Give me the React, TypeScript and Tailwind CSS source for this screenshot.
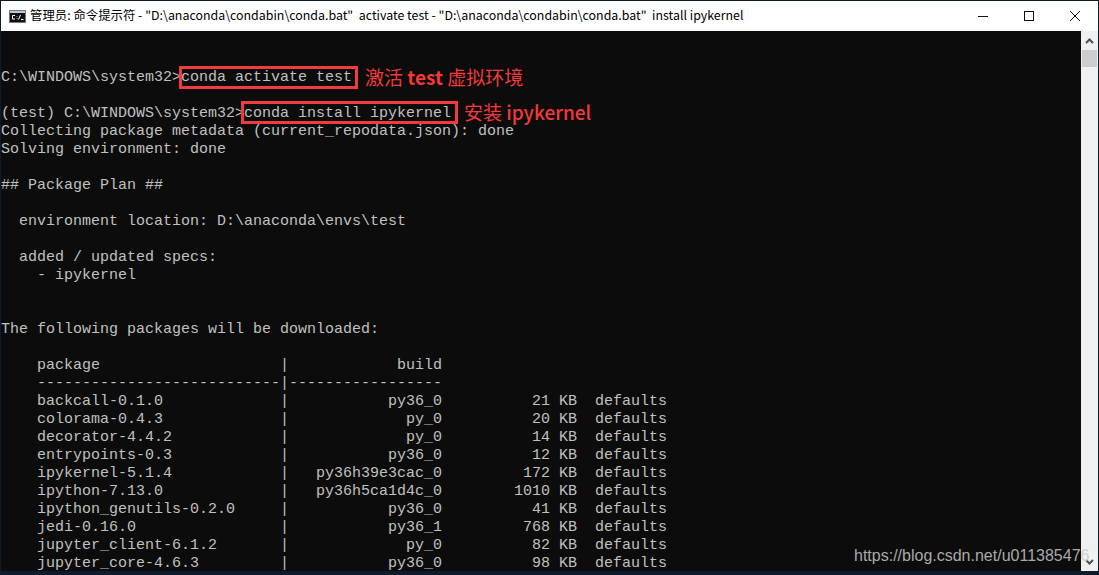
import { ReactNode } from 'react'

const packages = [
  ['backcall-0.1.0', 'py36_0', '21 KB'],
  ['colorama-0.4.3', 'py_0', '20 KB'],
  ['decorator-4.4.2', 'py_0', '14 KB'],
  ['entrypoints-0.3', 'py36_0', '12 KB'],
  ['ipykernel-5.1.4', 'py36h39e3cac_0', '172 KB'],
  ['ipython-7.13.0', 'py36h5ca1d4c_0', '1010 KB'],
  ['ipython_genutils-0.2.0', 'py36_0', '41 KB'],
  ['jedi-0.16.0', 'py36_1', '768 KB'],
  ['jupyter_client-6.1.2', 'py_0', '82 KB'],
  ['jupyter_core-4.6.3', 'py36_0', '98 KB'],
]

const packageRows = packages.map(
  ([name, build, size]) =>
    `    ${name.padEnd(27)}|${build.padStart(17)}${size.padStart(15)}  defaults`
)

const lines = [
  '',
  '',
  'C:\\WINDOWS\\system32>conda activate test',
  '',
  '(test) C:\\WINDOWS\\system32>conda install ipykernel',
  'Collecting package metadata (current_repodata.json): done',
  'Solving environment: done',
  '',
  '## Package Plan ##',
  '',
  '  environment location: D:\\anaconda\\envs\\test',
  '',
  '  added / updated specs:',
  '    - ipykernel',
  '',
  '',
  'The following packages will be downloaded:',
  '',
  '    package                    |            build',
  '    ---------------------------|-----------------',
  ...packageRows,
]

function Label({ className, children }: { className: string; children: ReactNode }) {
  return (
    <span className={`absolute text-[19px] leading-[20px] text-[#f23a3a] whitespace-nowrap font-['Noto_Sans_CJK_SC',sans-serif] ${className}`}>
      {children}
    </span>
  )
}

export default function App() {
  return (
    <div className="relative h-[575px] w-[1099px] overflow-hidden bg-[#0f1a2a] pt-px pl-px pr-px">
      <div className="flex h-[570px] w-[1097px] flex-col">
        {/* Title bar */}
        <div className="flex h-[30px] shrink-0 items-center bg-white text-black">
          <svg width="17" height="13" viewBox="0 0 17 13" className="ml-[8px] shrink-0">
            <rect x="0.5" y="0.5" width="16" height="12" fill="#111" stroke="#777" />
            <rect x="1" y="1" width="15" height="2" fill="#bfc8d6" />
            <path d="M6 5.5H3.5V9H6M8 6v.6M8 8.4V9M9.5 9.5l2-4.5M12 9.5h2.5" stroke="#fff" fill="none" />
          </svg>
          <span className="ml-[4px] -mt-px whitespace-pre font-['Noto_Sans_CJK_SC',sans-serif] text-[12.4px] leading-none">
            管理员: 命令提示符 - "D:\anaconda\condabin\conda.bat"  activate test - "D:\anaconda\condabin\conda.bat"  install ipykernel
          </span>
          <div className="ml-auto flex shrink-0 items-center">
            <svg width="46" height="30" viewBox="0 0 46 30">
              <path d="M18 15.5h10" stroke="#111" />
            </svg>
            <svg width="46" height="30" viewBox="0 0 46 30">
              <rect x="18.5" y="10.5" width="9" height="9" fill="none" stroke="#111" />
            </svg>
            <svg width="46" height="30" viewBox="0 0 46 30">
              <path d="M18 10l10 10M28 10L18 20" stroke="#111" />
            </svg>
          </div>
        </div>

        <div className="flex min-h-0 flex-1">
          {/* Console */}
          <div className="relative min-w-0 flex-1 overflow-hidden bg-[#0c0c0c]">
            <div className="whitespace-pre pt-[2px] font-['Liberation_Mono',monospace] text-[15px] leading-[18px] text-[#c0c0c0]">
              {lines.map((line, i) => (
                <div key={i} className="h-[18px]">
                  {line}
                </div>
              ))}
            </div>

            {/* Red annotations */}
            <div className="absolute left-[178px] top-[35px] h-[23px] w-[179px] border-[3px] border-[#f03c3c]" />
            <Label className="left-[364px] top-[36px]">
              激活 <span className="font-semibold">test</span> 虚拟环境
            </Label>
            <div className="absolute left-[240px] top-[70px] h-[23px] w-[217px] border-[3px] border-[#f03c3c]" />
            <Label className="left-[463px] top-[71px]">
              安装 <span className="font-medium">ipykernel</span>
            </Label>
          </div>

          {/* Scrollbar */}
          <div className="flex w-[17px] shrink-0 flex-col bg-[#f0f0f0]">
            <div className="flex h-[19px] items-center justify-center">
              <svg width="9" height="6" viewBox="0 0 9 6">
                <path d="M1 5l3.5-3.5L8 5" fill="none" stroke="#505050" strokeWidth="2" />
              </svg>
            </div>
            <div className="mx-px h-[17px] bg-[#cdcdcd]" />
            <div className="mt-auto flex h-[19px] items-center justify-center">
              <svg width="9" height="6" viewBox="0 0 9 6">
                <path d="M1 1l3.5 3.5L8 1" fill="none" stroke="#505050" strokeWidth="2" />
              </svg>
            </div>
          </div>
        </div>
      </div>

      {/* Watermark */}
      <span className="absolute left-[854px] top-[546px] whitespace-nowrap font-['Liberation_Sans',sans-serif] text-[16px] leading-[20px] text-[#a9a9a9]">
        https://blog.csdn.net/u01138547
        <span className="text-[#cfcfcf]">6</span>
      </span>
    </div>
  )
}
